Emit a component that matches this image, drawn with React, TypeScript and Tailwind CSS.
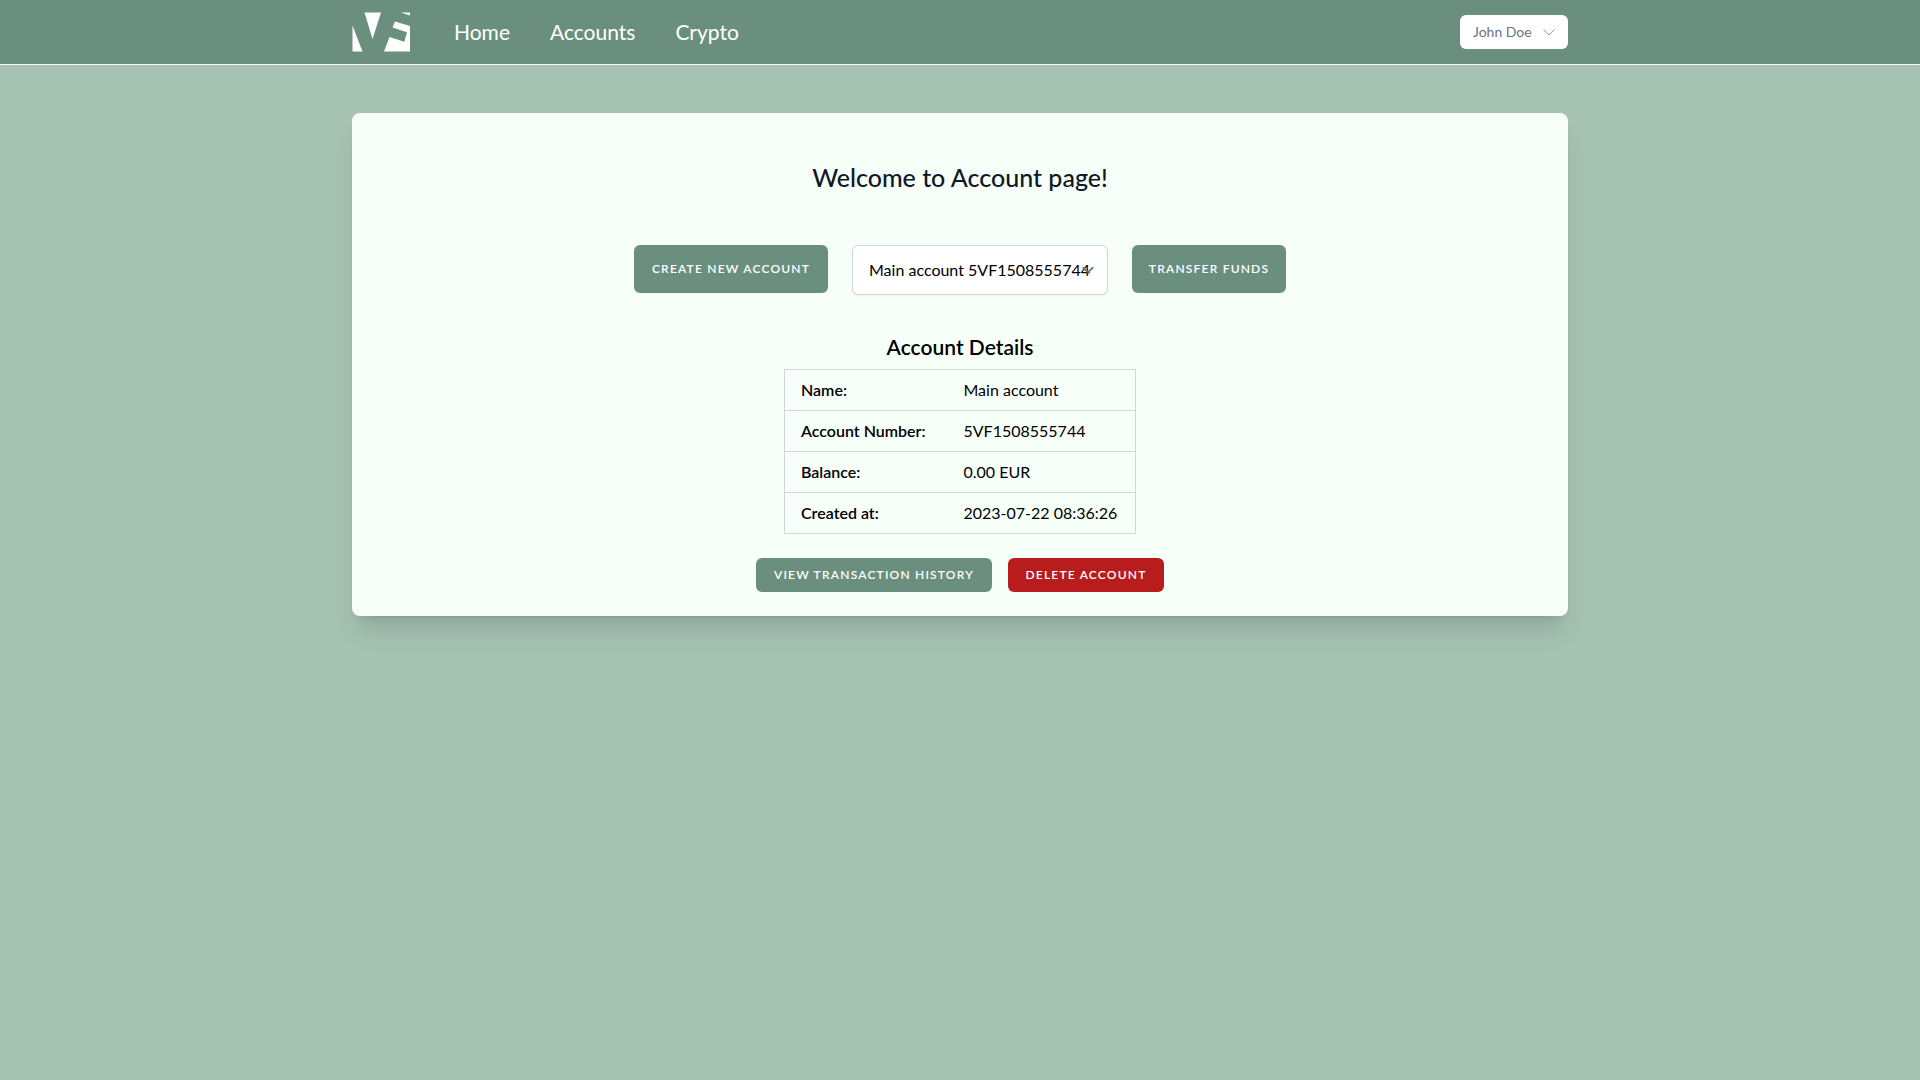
import React from "react";

const navLinks = ["Home", "Accounts", "Crypto"];

const details = [
  ["Name:", "Main account"],
  ["Account Number:", "5VF1508555744"],
  ["Balance:", "0.00 EUR"],
  ["Created at:", "2023-07-22 08:36:26"],
];

const buttonBase =
  "inline-flex items-center justify-center rounded-md text-xs font-semibold uppercase tracking-widest whitespace-nowrap text-white";

function Logo() {
  return (
    <svg viewBox="0 0 58 40" className="h-10 w-[58px]" fill="white" aria-label="VF">
      <path d="M0.5 13.5 L10.5 39.5 H0.5 Z" />
      <path d="M12.5 0.5 H29 L20.5 27 Z" />
      <path d="M49 0.5 H58 V3.5 Z" />
      <path d="M43 9.5 L58 14 V39.5 H32 L37.5 25 L52.3 29.7 L55 20.3 L40.5 15.5 Z" />
    </svg>
  );
}

export default function App() {
  return (
    <div className="min-h-screen bg-[#a5c2b3] font-['Lato',sans-serif] text-black">
      <nav className="border-b border-gray-100 bg-[#6b8f7f]">
        <div className="mx-auto flex h-16 max-w-7xl items-center justify-between px-8">
          <div className="flex items-center">
            <a href="#home">
              <Logo />
            </a>
            <div className="ml-11 flex items-center gap-10 text-[21px] leading-7 text-white">
              {navLinks.map((label) => (
                <a key={label} href={`#${label.toLowerCase()}`}>
                  {label}
                </a>
              ))}
            </div>
          </div>
          <button className="flex h-[34px] w-[108px] items-center justify-between rounded-md bg-white pr-[11px] pl-[13px] text-sm leading-4 text-gray-500">
            John Doe
            <svg viewBox="0 0 16 16" className="h-4 w-4 fill-none stroke-gray-400">
              <path d="M2.5 5.5 L8 11 L13.5 5.5" />
            </svg>
          </button>
        </div>
      </nav>

      <main className="mx-auto max-w-7xl px-8 py-12">
        <section className="flex flex-col items-center rounded-lg bg-[#f7fff9] p-6 shadow-xl">
          <h1 className="mt-6 text-[25px] leading-8 font-medium text-gray-900">Welcome to Account page!</h1>
          <div className="mt-13 flex items-start gap-6">
            <button className={`${buttonBase} h-12 w-[194px] bg-[#6b8f7f]`}>Create new account</button>
            <div className="relative">
              <select
                aria-label="Account"
                className="h-[50px] w-64 appearance-none rounded-md border border-gray-300 bg-white px-4 text-base shadow-xs"
              >
                <option>Main account 5VF1508555744</option>
              </select>
              <svg
                viewBox="0 0 20 20"
                className="pointer-events-none absolute top-[13px] right-2 h-6 w-6 fill-none stroke-gray-500 stroke-[1.5]"
                strokeLinecap="round"
                strokeLinejoin="round"
              >
                <path d="M6 8l4 4 4-4" />
              </svg>
            </div>
            <button className={`${buttonBase} h-12 w-[154px] bg-[#6b8f7f]`}>Transfer funds</button>
          </div>
          <h2 className="mt-9 text-[21px] leading-8 font-semibold">Account Details</h2>
          <table className="mt-1.5 w-[352px] border-collapse border border-gray-300 text-left">
            <tbody>
              {details.map(([label, value]) => (
                <tr key={label} className="border-b border-gray-300">
                  <th scope="row" className="w-[163px] py-2 pl-4 font-semibold">{label}</th>
                  <td className="px-4 py-2">{value}</td>
                </tr>
              ))}
            </tbody>
          </table>
          <div className="mt-6 flex gap-4">
            <button className={`${buttonBase} h-[34px] w-[236px] bg-[#6b8f7f]`}>View transaction history</button>
            <button className={`${buttonBase} h-[34px] w-[156px] bg-[#b91c1c]`}>Delete account</button>
          </div>
        </section>
      </main>
    </div>
  );
}
